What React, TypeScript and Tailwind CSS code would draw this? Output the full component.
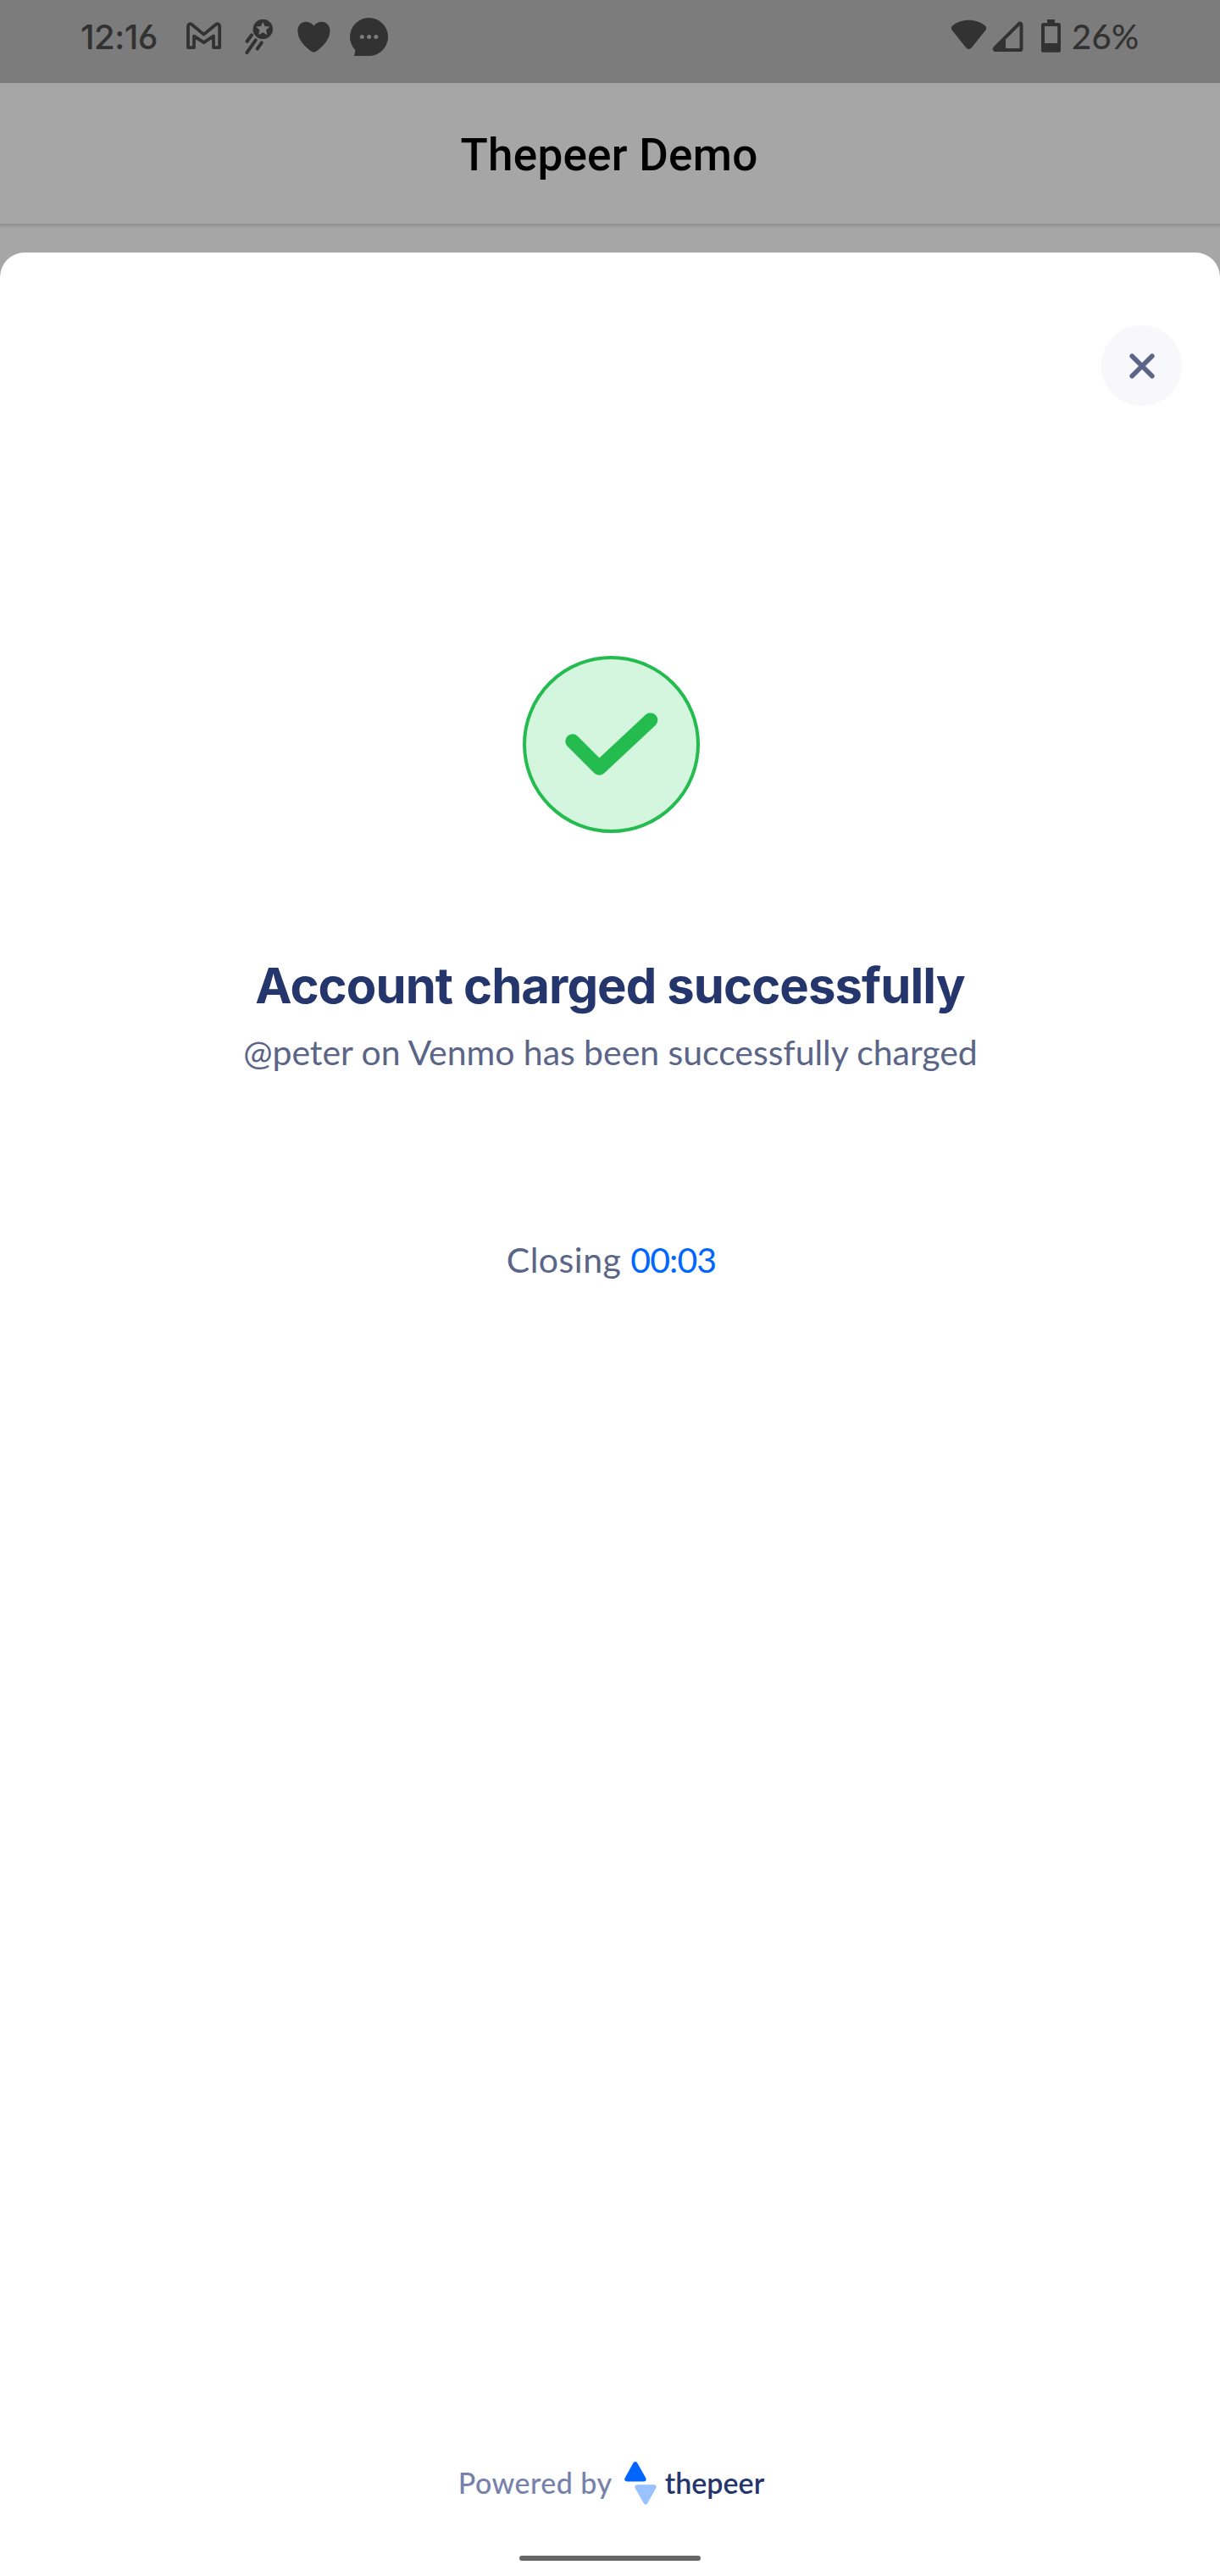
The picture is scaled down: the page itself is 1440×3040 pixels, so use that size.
const ink = "#323232";

function GmailIcon() {
  return (
    <svg className="h-[54px] w-[42px]" viewBox="220 16 42 54" fill="none" stroke={ink} strokeWidth="3.8" strokeLinejoin="round">
      <path d="M222 56.1H229V42.6L240.5 50.2L252 42.6V56.1H259.2V31.2C259.2 28.4 256.8 27.3 254.6 29L240.5 40.6L226.5 29C224.3 27.3 222 28.4 222 31.2Z" />
    </svg>
  );
}

function CometIcon() {
  return (
    <svg className="h-[54px] w-[36px]" viewBox="288 16 36 54">
      <circle cx="310.3" cy="34.4" r="11.7" fill={ink} />
      <path
        d="M310.3 25.8L312.6 31L318.4 31.6L314.1 35.4L315.4 41.2L310.3 38.2L305.2 41.2L306.5 35.4L302.2 31.6L308 31Z"
        fill="#7c7c7c"
      />
      <path d="M297.2 41.3L291.6 48.8M301.8 47.3L291.4 62.2M308.8 50.3L303.7 57.6" stroke={ink} strokeWidth="4" strokeLinecap="round" />
    </svg>
  );
}

function HeartIcon() {
  return (
    <svg className="h-[54px] w-[40px]" viewBox="350 16 40 54" fill={ink}>
      <path d="M370.4 30.6C367.6 27.2 364.6 25.8 361.2 25.8C355.4 25.8 351.4 30.4 351.4 36.2C351.4 46.2 358 53.2 366.2 59.8C369.4 62.2 371.4 62.2 374.6 59.8C382.8 53.2 389.4 46.2 389.4 36.2C389.4 30.4 385.4 25.8 379.6 25.8C376.2 25.8 373.2 27.2 370.4 30.6Z" />
    </svg>
  );
}

function ChatIcon() {
  return (
    <svg className="h-[54px] w-[46px]" viewBox="413 16 46 54">
      <path d="M418 66L419.4 59.2A22.5 22.5 0 1 1 435.5 66Z" fill={ink} />
      <circle cx="427.3" cy="43.6" r="2.5" fill="#7c7c7c" />
      <circle cx="435.6" cy="43.6" r="2.5" fill="#7c7c7c" />
      <circle cx="443.8" cy="43.6" r="2.5" fill="#7c7c7c" />
    </svg>
  );
}

function WifiIcon() {
  return (
    <svg className="h-[54px] w-[42px]" viewBox="1122 16 42 54" fill={ink}>
      <path d="M1143.5 23.7C1151 23.7 1157.8 26 1163 30.4C1164.5 32 1164.5 34 1163.2 35.8L1147 56C1145 58.6 1142 58.6 1140 56L1123.8 35.8C1122.5 34 1122.5 32 1124 30.4C1129.2 26 1136 23.7 1143.5 23.7Z" />
    </svg>
  );
}

function SignalIcon() {
  return (
    <svg className="h-[54px] w-[38px]" viewBox="1171 16 38 54" stroke={ink} strokeWidth="4" strokeLinejoin="round" fill="none">
      <path d="M1175.2 59C1173.6 59 1173.2 57.6 1174.4 56.4L1202.4 28.4C1203.8 27 1205.5 27.6 1205.5 29.4V57.4Q1205.5 59 1203.9 59Z" />
      <path d="M1174.8 58.4L1185 48V58.4Z" fill={ink} />
    </svg>
  );
}

function BatteryIcon() {
  return (
    <svg className="h-[54px] w-[24px]" viewBox="1229 16 24 54" fill={ink}>
      <path
        fillRule="evenodd"
        d="M1236 23H1245V27H1249.4A2.6 2.6 0 0 1 1252 29.6V59.2A2.6 2.6 0 0 1 1249.4 61.8H1231.6A2.6 2.6 0 0 1 1229 59.2V29.6A2.6 2.6 0 0 1 1231.6 27H1236ZM1233 31V51H1248.2V31Z"
      />
    </svg>
  );
}

function StatusBar() {
  return (
    <header className="flex h-[98px] items-start justify-between bg-[#7c7c7c] pt-4 pr-[92px] pl-[95px] text-[#323232]">
      <div className="flex items-start">
        <span className="mt-1 w-[125px] font-['Inter',sans-serif] text-[40px] leading-[48px] font-medium tracking-[-0.55px] whitespace-nowrap [font-feature-settings:'cv03','ss01']">
          12:16
        </span>
        <GmailIcon />
        <div className="ml-[26px] flex"><CometIcon /></div>
        <div className="ml-[26px] flex"><HeartIcon /></div>
        <div className="ml-[23px] flex"><ChatIcon /></div>
      </div>
      <div className="flex items-start">
        <WifiIcon />
        <div className="ml-[7px] flex"><SignalIcon /></div>
        <div className="ml-5 flex"><BatteryIcon /></div>
        <span className="mt-[3px] ml-3 w-[83px] font-['Lato',sans-serif] text-[40px] leading-[48px] font-medium tracking-[0.3px] whitespace-nowrap">
          26%
        </span>
      </div>
    </header>
  );
}

function PeerLogo() {
  return (
    <svg className="h-[51px] w-[38px]" viewBox="0 0 38 51" strokeWidth="5.4" strokeLinejoin="round">
      <path d="M12.8 2.9L2.9 20.7H22.9Z" fill="#0066ff" stroke="#0066ff" />
      <path d="M15 30H35L25 47.8Z" fill="#99c2ff" stroke="#99c2ff" />
    </svg>
  );
}

export default function App() {
  return (
    <div className="flex h-[3040px] w-[1440px] flex-col overflow-hidden bg-[#a6a6a6] font-['Lato',sans-serif]">
      <StatusBar />
      <div className="flex h-[168px] shrink-0 items-start justify-center border-b-2 border-[#939393] pt-[55px] pr-[2px] shadow-[0_1px_2px_rgba(0,0,0,0.12)]">
        <h1 className="font-['Roboto',sans-serif] text-[53px] leading-[60px] font-medium tracking-[0.27px] whitespace-nowrap text-black">
          Thepeer Demo
        </h1>
      </div>

      <main className="mt-8 flex flex-1 flex-col items-center rounded-t-[29px] bg-white">
        <div className="flex w-full justify-end pt-[86px] pr-[45px]">
          <button aria-label="Close" className="flex size-[95px] items-center justify-center rounded-full bg-[#f7f7fc]">
            <svg className="size-[30px]" viewBox="0 0 30 30" stroke="#5a6587" strokeWidth="5.6" strokeLinecap="round">
              <path d="M3.2 3.2L26.8 26.8M26.8 3.2L3.2 26.8" />
            </svg>
          </button>
        </div>

        <svg className="mt-[295px] ml-[3px] size-[209px]" viewBox="0 0 209 209" fill="none">
          <circle cx="104.5" cy="104.5" r="102.5" fill="#d5f6de" stroke="#24bb4f" strokeWidth="4" />
          <path d="M58.8 100.8L90.3 132.2L150.8 75.8" stroke="#24bb4f" strokeWidth="17" strokeLinecap="round" strokeLinejoin="round" />
        </svg>

        <h2 className="mt-[145px] font-['Inter',sans-serif] text-[58px] leading-[70px] font-bold tracking-[-0.92px] whitespace-nowrap text-[#24366b]">
          Account charged successfully
        </h2>
        <p className="mt-[19px] ml-px text-[41px] leading-[50px] tracking-[-0.05px] whitespace-nowrap text-[#5a6587]">
          @peter on Venmo has been successfully charged
        </p>
        <p className="mt-[195px] ml-[3px] flex gap-[11px] text-[41px] leading-[50px] whitespace-nowrap text-[#5a6587]">
          <span className="tracking-[0.5px]">Closing</span>
          <span className="tracking-[-0.9px] text-[#0066ff]">00:03</span>
        </p>

        <footer className="mt-auto flex w-full flex-col items-center pb-[18px]">
          <div className="ml-[2px] flex items-start text-[34px] leading-[40px] whitespace-nowrap">
            <span className="mt-[5px] w-[197px] pl-px font-medium tracking-[0.45px] text-[#7682aa]">Powered by</span>
            <PeerLogo />
            <span className="mt-[5px] ml-[10px] font-semibold text-[#24366b]">thepeer</span>
          </div>
          <div className="mt-[60px] h-[6px] w-[214px] rounded-full bg-[#666666]" />
        </footer>
      </main>
    </div>
  );
}
